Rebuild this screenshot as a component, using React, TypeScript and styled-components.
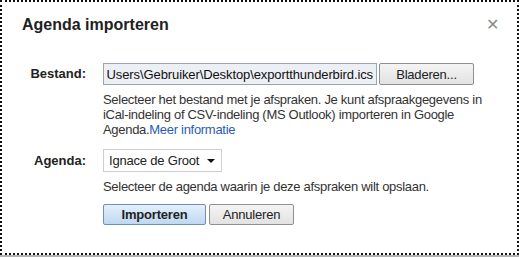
import styled, { createGlobalStyle } from "styled-components";

const GlobalStyle = createGlobalStyle`
  html, body {
    margin: 0;
    padding: 0;
    background: #b4b4b4;
  }
  body {
    font-family: "Liberation Sans", Arial, sans-serif;
  }
`;

const Dialog = styled.div`
  box-sizing: border-box;
  width: 519px;
  height: 255px;
  background: #fff;
  border: 2px dotted #111;
  padding: 13px 20px 0 20px;
  color: #222;
`;

const Header = styled.div`
  display: flex;
  justify-content: space-between;
  align-items: center;
  height: 20px;
  margin-bottom: 28px;
`;

const Title = styled.h1`
  margin: 0;
  font-size: 16px;
  font-weight: bold;
  line-height: 20px;
  color: #222;
`;

const Close = styled.span`
  font-size: 16px;
  line-height: 20px;
  color: #8a8a8a;
  margin-right: -2px;
  cursor: pointer;
`;

const Form = styled.div`
  display: grid;
  grid-template-columns: 64px 1fr;
  column-gap: 17px;
  align-items: start;
`;

const Label = styled.div<{ $top: number }>`
  font-size: 13px;
  font-weight: bold;
  text-align: right;
  line-height: 16px;
  padding-top: ${(p) => p.$top}px;
  color: #222;
`;

const Field = styled.div<{ $mb: number }>`
  display: flex;
  flex-direction: column;
  margin-bottom: ${(p) => p.$mb}px;
`;

const FileRow = styled.div`
  display: flex;
  gap: 2px;
`;

const FileInput = styled.div`
  box-sizing: border-box;
  width: 274px;
  height: 22px;
  border: 1px solid #9aa3ae;
  background: #eceff4;
  display: flex;
  justify-content: flex-end;
  align-items: center;
  overflow: hidden;
  white-space: nowrap;
  padding: 0 3px 0 0;
  font-size: 13px;
  letter-spacing: -0.1px;
  color: #111;
`;

const Button = styled.button<{ $w: number; $primary?: boolean }>`
  box-sizing: border-box;
  width: ${(p) => p.$w}px;
  height: ${(p) => (p.$primary !== undefined ? 21 : 22)}px;
  font-family: "Liberation Sans", Arial, sans-serif;
  font-size: 13px;
  letter-spacing: -0.2px;
  font-weight: ${(p) => (p.$primary ? "bold" : "normal")};
  color: #222;
  padding: 0;
  border-radius: 2px;
  border: 1px solid ${(p) => (p.$primary ? "#6f8fb6" : "#8f8f8f")};
  background: ${(p) =>
    p.$primary
      ? "linear-gradient(#e3f0fc, #bfd8f1)"
      : "linear-gradient(#f4f4f4, #e2e2e2)"};
  cursor: pointer;
`;

const Help = styled.p`
  margin: 7px 0 0 0;
  width: 395px;
  font-size: 13px;
  letter-spacing: -0.3px;
  line-height: 15px;
  color: #333;
  white-space: nowrap;
`;

const Link = styled.a`
  color: #2a5cb4;
  text-decoration: none;
`;

const Select = styled.div`
  box-sizing: border-box;
  width: 119px;
  height: 23px;
  border: 1px solid #cfcfcf;
  background: #fff;
  display: flex;
  align-items: center;
  justify-content: space-between;
  padding: 0 6px 0 5px;
  font-size: 13px;
  letter-spacing: -0.2px;
  color: #222;
`;

const Caret = styled.span`
  width: 0;
  height: 0;
  border-left: 4px solid transparent;
  border-right: 4px solid transparent;
  border-top: 4px solid #111;
`;

const Actions = styled.div`
  display: flex;
  gap: 3px;
  margin-top: 10px;
`;

export default function App() {
  return (
    <>
      <GlobalStyle />
      <Dialog>
        <Header>
          <Title>Agenda importeren</Title>
          <Close>✕</Close>
        </Header>
        <Form>
          <Label $top={3}>Bestand:</Label>
          <Field $mb={12}>
            <FileRow>
              <FileInput>Users\Gebruiker\Desktop\exportthunderbird.ics</FileInput>
              <Button $w={95}>Bladeren...</Button>
            </FileRow>
            <Help>
              Selecteer het bestand met je afspraken. Je kunt afspraakgegevens in
              <br />
              iCal-indeling of CSV-indeling (MS Outlook) importeren in Google
              <br />
              Agenda.<Link href="#">Meer informatie</Link>
            </Help>
          </Field>
          <Label $top={4}>Agenda:</Label>
          <Field $mb={0}>
            <Select>
              <span>Ignace de Groot</span>
              <Caret />
            </Select>
            <Help>Selecteer de agenda waarin je deze afspraken wilt opslaan.</Help>
            <Actions>
              <Button $w={103} $primary>Importeren</Button>
              <Button $w={85} $primary={false}>Annuleren</Button>
            </Actions>
          </Field>
        </Form>
      </Dialog>
    </>
  );
}
